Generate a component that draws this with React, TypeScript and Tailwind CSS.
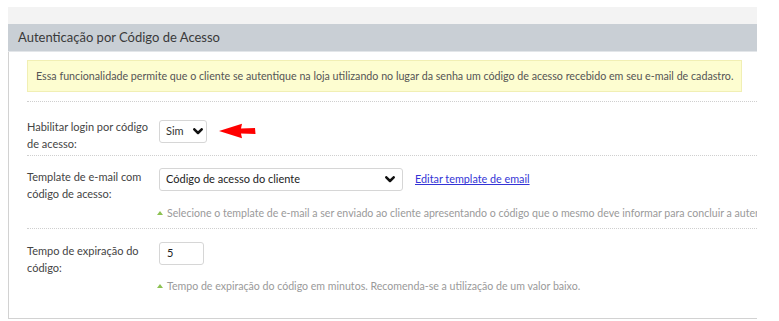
import React from 'react'

// Small bold chevron used by the native-looking selects
function Chevron() {
  return (
    <svg width="10" height="7" viewBox="0 0 10 7" className="shrink-0">
      <path d="M1.3 1.3 L5 5 L8.7 1.3" fill="none" stroke="#111" strokeWidth="2.5" strokeLinecap="round" strokeLinejoin="round" />
    </svg>
  )
}

function RedArrow() {
  return (
    <svg width="37" height="16" viewBox="0 0 37 16">
      <path d="M0 8 L23 0.8 L22 5.5 L36 5 L36.5 11 L22 10.5 L23 15.2 Z" fill="#f00" />
    </svg>
  )
}

function Hint({ children }: { children: React.ReactNode }) {
  return (
    <div className="flex items-center gap-[4px] text-[10.6px] leading-[14px] text-[#9a9a9a] whitespace-nowrap -ml-[2px]">
      <span className="inline-block w-0 h-0 border-l-[3px] border-r-[3px] border-b-[4px] border-l-transparent border-r-transparent border-b-[#8cc152]" />
      <span>{children}</span>
    </div>
  )
}

export default function App() {
  return (
    <div className="w-[779px] h-[321px] overflow-hidden bg-white pt-[7px] pl-[8px] font-['Lato','Liberation_Sans',sans-serif] text-[#444]">
      <div className="w-[749px] overflow-hidden">
        {/* strip from the panel above */}
        <div className="h-[17px] bg-[#f3f3f3]" />

        {/* Header */}
        <div className="h-[28px] bg-[#c9cfd5] border-b border-[#e3e6e9] flex items-center pl-[10px] text-[13px] text-[#3a3a3a]">
          Autenticação por Código de Acesso
        </div>

        {/* Body */}
        <div className="h-[267px] border-l border-b border-[#d2d2d2] pl-[18px] pt-[8px]">
          <div className="w-[715px] h-[32px] bg-[#fdfdd0] border border-[#f1efb4] flex items-center pl-[8px] text-[10.7px] text-[#555] whitespace-nowrap">
            Essa funcionalidade permite que o cliente se autentique na loja utilizando no lugar da senha um código de acesso recebido em seu e-mail de cadastro.
          </div>

          {/* Row 1 */}
          <div className="mt-[9px] h-[54px] border-t border-dotted border-[#cfcfcf] pt-[16px] flex text-[11px]">
            <div className="w-[132px] leading-[17px]">
              Habilitar login por código<br />de acesso:
            </div>
            <div className="flex items-start pt-[2px]">
              <div className="w-[48px] h-[23px] border border-[#d6d6d6] rounded-[3px] flex items-center pl-[6px] text-[11px] text-[#333]">
                <span className="w-[27px]">Sim</span>
                <Chevron />
              </div>
              <div className="ml-[12px] mt-[3px]">
                <RedArrow />
              </div>
            </div>
          </div>

          {/* Row 2 */}
          <div className="h-[73px] border-t border-dotted border-[#cfcfcf] pt-[12px] text-[11px]">
            <div className="flex">
              <div className="w-[132px] leading-[17px]">
                Template de e-mail com<br />código de acesso:
              </div>
              <div className="flex items-center h-[23px]">
                <div className="w-[244px] h-[23px] border border-[#d6d6d6] rounded-[3px] flex items-center justify-between pl-[6px] pr-[7px] text-[11px] text-[#222]">
                  <span>Código de acesso do cliente</span>
                  <Chevron />
                </div>
                <a href="#" className="ml-[12px] text-[#3434d6] underline text-[10.8px]">
                  Editar template de email
                </a>
              </div>
            </div>
            <div className="pl-[132px] mt-[4px]">
              <Hint>Selecione o template de e-mail a ser enviado ao cliente apresentando o código que o mesmo deve informar para concluir a autenticação.</Hint>
            </div>
          </div>

          {/* Row 3 */}
          <div className="border-t border-dotted border-[#cfcfcf] pt-[13px] text-[11px]">
            <div className="flex">
              <div className="w-[132px] leading-[17px]">
                Tempo de expiração do<br />código:
              </div>
              <div className="w-[45px] h-[23px] border border-[#d6d6d6] rounded-[3px] flex items-center pl-[7px] text-[11px] text-[#222]">
                5
              </div>
            </div>
            <div className="pl-[132px] mt-[3px]">
              <Hint>Tempo de expiração do código em minutos. Recomenda-se a utilização de um valor baixo.</Hint>
            </div>
          </div>
        </div>
      </div>
    </div>
  )
}
